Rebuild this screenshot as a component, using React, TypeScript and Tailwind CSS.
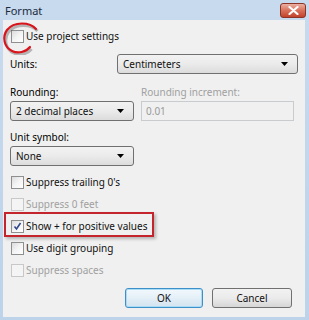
import React from "react";

function Checkbox({ checked = false, disabled = false }: { checked?: boolean; disabled?: boolean }) {
  return (
    <span
      className={
        "relative flex h-[13px] w-[13px] shrink-0 items-center justify-center border " +
        (disabled
          ? "border-[#c8c8c8] bg-[#f4f4f4]"
          : "border-[#8e8f8f] bg-gradient-to-br from-[#dcdcdc] via-[#f4f4f4] to-white")
      }
    >
      {checked && (
        <svg width="9" height="9" viewBox="0 0 9 9">
          <path d="M1.5 4.5 L3.5 7 L7.5 1" fill="none" stroke="#31488d" strokeWidth="1.6" />
        </svg>
      )}
    </span>
  );
}

function Select({ value, className }: { value: string; className: string }) {
  return (
    <div
      className={
        "flex h-[20px] items-center justify-between rounded-[3px] border border-[#707070] bg-gradient-to-b from-[#f2f2f2] via-[#ebebeb] to-[#dcdcdc] pl-[5px] pr-[9px] text-[#111]" +
        " " +
        className
      }
    >
      <span>{value}</span>
      <svg width="7" height="4" viewBox="0 0 7 4">
        <path d="M0 0 H7 L3.5 4 Z" fill="#000" />
      </svg>
    </div>
  );
}

function CheckRow({ label, checked, disabled }: { label: string; checked?: boolean; disabled?: boolean }) {
  return (
    <div className="flex h-[13px] items-center gap-[2px] pl-[1px]">
      <Checkbox checked={checked} disabled={disabled} />
      <span className={disabled ? "text-[#a0a0a0]" : "text-[#111]"}>{label}</span>
    </div>
  );
}

export default function App() {
  return (
    <div className="flex h-[320px] w-[309px] flex-col bg-gradient-to-b from-[#c8daee] to-[#bcd3ea] font-['Noto_Sans',sans-serif] text-[10px] leading-[13px]">
      <div className="flex h-[20px] shrink-0 items-center justify-between pl-[5px] pr-[3px]">
        <span className="text-[11px] text-[#1b2a3d]">Format</span>
        <div className="mt-[1px] flex h-[15px] w-[26px] items-center justify-center rounded-[3px] border border-[#8a3526] bg-gradient-to-b from-[#eab0a3] via-[#d8705a] to-[#c3422a]">
          <svg width="11" height="9" viewBox="0 0 11 9">
            <path d="M1.5 1 L9.5 8 M9.5 1 L1.5 8" stroke="#fff" strokeWidth="2.2" strokeLinecap="round" />
          </svg>
        </div>
      </div>
      <div className="relative mx-[3px] mb-[3px] mr-[4px] flex flex-1 flex-col bg-[#f0f0f0] pl-[7px] pr-[7px] pt-[10px]">
        <CheckRow label="Use project settings" />

        <div className="mt-[11px] flex items-center justify-between">
          <span>Units:</span>
          <Select value="Centimeters" className="w-[181px]" />
        </div>

        <div className="mt-[12px] flex gap-[7px]">
          <div className="flex w-[124px] flex-col gap-[2px]">
            <span className="h-[13px]">Rounding:</span>
            <Select value="2 decimal places" className="w-[124px]" />
          </div>
          <div className="flex flex-col gap-[2px]">
            <span className="h-[13px] text-[#a0a0a0]">Rounding increment:</span>
            <div className="flex h-[20px] w-[153px] items-center border border-[#c9cccf] bg-[#f0f0f0] pl-[4px] text-[#9a9a9a]">
              0.01
            </div>
          </div>
        </div>

        <span className="mt-[10px] h-[13px]">Unit symbol:</span>
        <Select value="None" className="mt-[2px] w-[124px]" />

        <div className="mt-[10px] flex flex-col gap-[9px]">
          <CheckRow label="Suppress trailing 0's" />
          <CheckRow label="Suppress 0 feet" disabled />
          <CheckRow label="Show + for positive values" checked />
          <CheckRow label="Use digit grouping" />
          <CheckRow label="Suppress spaces" disabled />
        </div>

        <div className="mt-[11px] flex justify-end gap-[9px] pr-[6px]">
          <div className="flex h-[20px] w-[78px] items-center justify-center rounded-[3px] border border-[#3c8fc7] bg-gradient-to-b from-[#f3f9fd] via-[#e4eff7] to-[#d3e3ef] text-[#111] shadow-[inset_0_0_0_1px_#a9dcf6]">
            OK
          </div>
          <div className="flex h-[20px] w-[80px] items-center justify-center rounded-[3px] border border-[#707070] bg-gradient-to-b from-[#f2f2f2] via-[#ebebeb] to-[#d6d6d6] text-[#111]">
            Cancel
          </div>
        </div>

        {/* annotation: red circle */}
        <svg className="pointer-events-none absolute left-[-3px] top-[1px]" width="44" height="34" viewBox="0 0 44 34">
          <path
            d="M36 8 C30 1, 14 0, 7 9 C2 16, 4 26, 12 30 C18 33, 26 31, 30 26"
            fill="none"
            stroke="rgba(0,0,0,0.25)"
            strokeWidth="3"
            transform="translate(1.5,2)"
          />
          <path
            d="M36 8 C30 1, 14 0, 7 9 C2 16, 4 26, 12 30 C18 33, 26 31, 30 26"
            fill="none"
            stroke="#d8141c"
            strokeWidth="2.2"
            strokeLinecap="round"
          />
        </svg>

        {/* annotation: red rectangle */}
        <div className="pointer-events-none absolute left-[1px] top-[192px] h-[25px] w-[150px] border-2 border-[#c4242c] shadow-[2px_2px_3px_rgba(0,0,0,0.25)]" />
      </div>
    </div>
  );
}
